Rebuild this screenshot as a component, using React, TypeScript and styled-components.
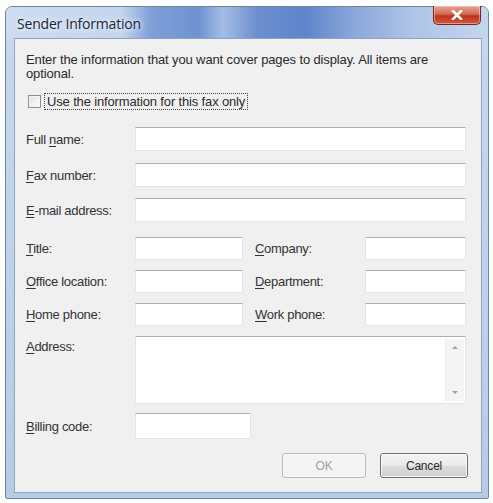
import * as React from "react";
import styled, { createGlobalStyle } from "styled-components";

const GlobalStyle = createGlobalStyle`
  html, body {
    margin: 0;
    padding: 0;
    background: #ffffff;
  }
  body {
    font-family: "Liberation Sans", Arial, sans-serif;
    color: #1f1f1f;
  }
`;

const Window = styled.div`
  box-sizing: border-box;
  width: 484px;
  height: 493px;
  margin: 6px 0 0 5px;
  display: flex;
  flex-direction: column;
  border: 1px solid #6f839c;
  border-radius: 7px 7px 2px 2px;
  background: linear-gradient(180deg, #c8d9ee 0%, #bcd1ea 60%, #b6cce6 100%);
  padding: 0 6px 5px 8px;
`;

const TitleBar = styled.div`
  height: 31px;
  display: flex;
  align-items: flex-start;
  margin: 0 -6px 0 -8px;
  padding: 0 6px 0 8px;
  border-radius: 6px 6px 0 0;
  background: linear-gradient(
    90deg,
    #cddcf0 0%,
    #c3d5ed 24%,
    #7fa0d8 30%,
    #6e92d2 40%,
    #a4bde4 45%,
    #6d8fd0 52%,
    #5f84cc 62%,
    #8aa7db 72%,
    #aec3e6 84%,
    #c4d5ee 100%
  );
`;

const Title = styled.span`
  flex: 1;
  margin: 7px 0 0 3px;
  font-family: "Open Sans", "Liberation Sans", sans-serif;
  font-size: 14px;
  letter-spacing: -0.2px;
  color: #1c2633;
  text-shadow: 0 0 8px #e8f0fa, 0 0 4px #eef4fb;
`;

const CloseButton = styled.div`
  width: 46px;
  height: 18px;
  margin: -1px 1px 0 0;
  display: flex;
  align-items: center;
  justify-content: center;
  border: 1px solid #6b2a24;
  border-top: none;
  border-radius: 0 0 5px 5px;
  background: linear-gradient(180deg, #e4a393 0%, #d36a55 45%, #c0321b 55%, #d0583d 100%);
  box-shadow: inset 0 0 0 1px rgba(255, 220, 210, 0.5);
`;

const Client = styled.div`
  flex: 1;
  box-sizing: border-box;
  background: #f0f0f0;
  border: 1px solid #8fa5bf;
  padding: 14px 15px 0 11px;
  font-size: 13px;
`;

const Intro = styled.p`
  margin: 0;
  line-height: 14px;
  letter-spacing: -0.13px;
  color: #2a2a2a;
`;

const CheckRow = styled.label`
  display: flex;
  align-items: center;
  gap: 4px;
  margin: 13px 0 0 2px;
`;

const CheckBox = styled.span`
  width: 11px;
  height: 11px;
  border: 1px solid #8e8f8f;
  background: linear-gradient(135deg, #dcdcdc 0%, #f2f2f2 60%, #ffffff 100%);
  box-shadow: inset 0 0 0 1px #f4f4f4;
`;

const FocusText = styled.span`
  padding: 0 2px;
  line-height: 15px;
  outline: 1px dotted #444;
  letter-spacing: -0.15px;
  color: #2a2a2a;
`;

const Form = styled.div`
  margin-top: 18px;
  display: flex;
  flex-direction: column;
`;

const Row = styled.div<{ $gap: number }>`
  display: grid;
  grid-template-columns: 109px 108px 122px 101px;
  align-items: center;
  margin-top: ${(p) => p.$gap}px;
`;

const Label = styled.span<{ $top?: boolean; $col2?: boolean }>`
  align-self: ${(p) => (p.$top ? "start" : "center")};
  padding-top: ${(p) => (p.$top ? 3 : 0)}px;
  padding-left: ${(p) => (p.$col2 ? 12 : 0)}px;
  letter-spacing: -0.3px;
  color: #333;
  u {
    text-decoration: underline;
    text-underline-offset: 2px;
  }
`;

const Field = styled.div<{ $span?: number; $h: number; $w?: number }>`
  box-sizing: border-box;
  grid-column: span ${(p) => p.$span ?? 1};
  height: ${(p) => p.$h}px;
  ${(p) => (p.$w ? `width: ${p.$w}px;` : "")}
  background: #ffffff;
  border: 1px solid #e3e7ec;
  border-top-color: #a9b0b8;
  display: flex;
  justify-content: flex-end;
`;

const ScrollTrack = styled.div`
  width: 18px;
  margin: 2px 1px 2px 0;
  display: flex;
  flex-direction: column;
  justify-content: space-between;
  align-items: center;
  background: #f4f4f4;
  border-left: 1px solid #ececec;
  padding: 7px 0;
`;

const Arrow = styled.span<{ $down?: boolean }>`
  width: 0;
  height: 0;
  border-left: 3px solid transparent;
  border-right: 3px solid transparent;
  ${(p) =>
    p.$down ? "border-top: 3px solid #a0a0a0;" : "border-bottom: 3px solid #a0a0a0;"}
`;

const ButtonBar = styled.div`
  display: flex;
  justify-content: flex-end;
  gap: 14px;
  margin: 14px -2px 0 0;
`;

const Button = styled.div<{ $disabled?: boolean; $w: number }>`
  box-sizing: border-box;
  width: ${(p) => p.$w}px;
  height: 25px;
  display: flex;
  align-items: center;
  justify-content: center;
  border: 1px solid ${(p) => (p.$disabled ? "#b8bcc0" : "#707070")};
  border-radius: 3px;
  background: ${(p) =>
    p.$disabled
      ? "#f4f4f4"
      : "linear-gradient(180deg, #f2f2f2 0%, #ebebeb 48%, #dddddd 52%, #cfcfcf 100%)"};
  box-shadow: inset 0 0 0 1px ${(p) => (p.$disabled ? "#f7f7f7" : "#fbfbfb")};
  color: ${(p) => (p.$disabled ? "#a0a0a0" : "#2a2a2a")};
  font-size: 12px;
  letter-spacing: -0.2px;
`;

const CloseGlyph = () => (
  <svg width="12" height="10" viewBox="0 0 12 10">
    <path d="M2 1 L10 9 M10 1 L2 9" stroke="#ffffff" strokeWidth="2.6" strokeLinecap="square" />
  </svg>
);

export default function App() {
  return (
    <>
      <GlobalStyle />
      <Window>
        <TitleBar>
          <Title>Sender Information</Title>
          <CloseButton>
            <CloseGlyph />
          </CloseButton>
        </TitleBar>
        <Client>
          <Intro>
            Enter the information that you want cover pages to display. All items are
            <br />
            optional.
          </Intro>
          <CheckRow>
            <CheckBox />
            <FocusText>Use the information for this fax only</FocusText>
          </CheckRow>
          <Form>
            <Row $gap={0}>
              <Label>
                Full <u>n</u>ame:
              </Label>
              <Field $span={3} $h={24} />
            </Row>
            <Row $gap={12}>
              <Label>
                <u>F</u>ax number:
              </Label>
              <Field $span={3} $h={24} />
            </Row>
            <Row $gap={11}>
              <Label>
                <u>E</u>-mail address:
              </Label>
              <Field $span={3} $h={24} />
            </Row>
            <Row $gap={15}>
              <Label>
                <u>T</u>itle:
              </Label>
              <Field $h={23} />
              <Label $col2>
                <u>C</u>ompany:
              </Label>
              <Field $h={23} />
            </Row>
            <Row $gap={10}>
              <Label>
                <u>O</u>ffice location:
              </Label>
              <Field $h={23} />
              <Label $col2>
                <u>D</u>epartment:
              </Label>
              <Field $h={23} />
            </Row>
            <Row $gap={10}>
              <Label>
                <u>H</u>ome phone:
              </Label>
              <Field $h={23} />
              <Label $col2>
                <u>W</u>ork phone:
              </Label>
              <Field $h={23} />
            </Row>
            <Row $gap={10}>
              <Label $top>
                <u>A</u>ddress:
              </Label>
              <Field $span={3} $h={68}>
                <ScrollTrack>
                  <Arrow />
                  <Arrow $down />
                </ScrollTrack>
              </Field>
            </Row>
            <Row $gap={9}>
              <Label>
                <u>B</u>illing code:
              </Label>
              <Field $span={2} $h={26} $w={116} />
            </Row>
          </Form>
          <ButtonBar>
            <Button $disabled $w={84}>
              OK
            </Button>
            <Button $w={88}>Cancel</Button>
          </ButtonBar>
        </Client>
      </Window>
    </>
  );
}
